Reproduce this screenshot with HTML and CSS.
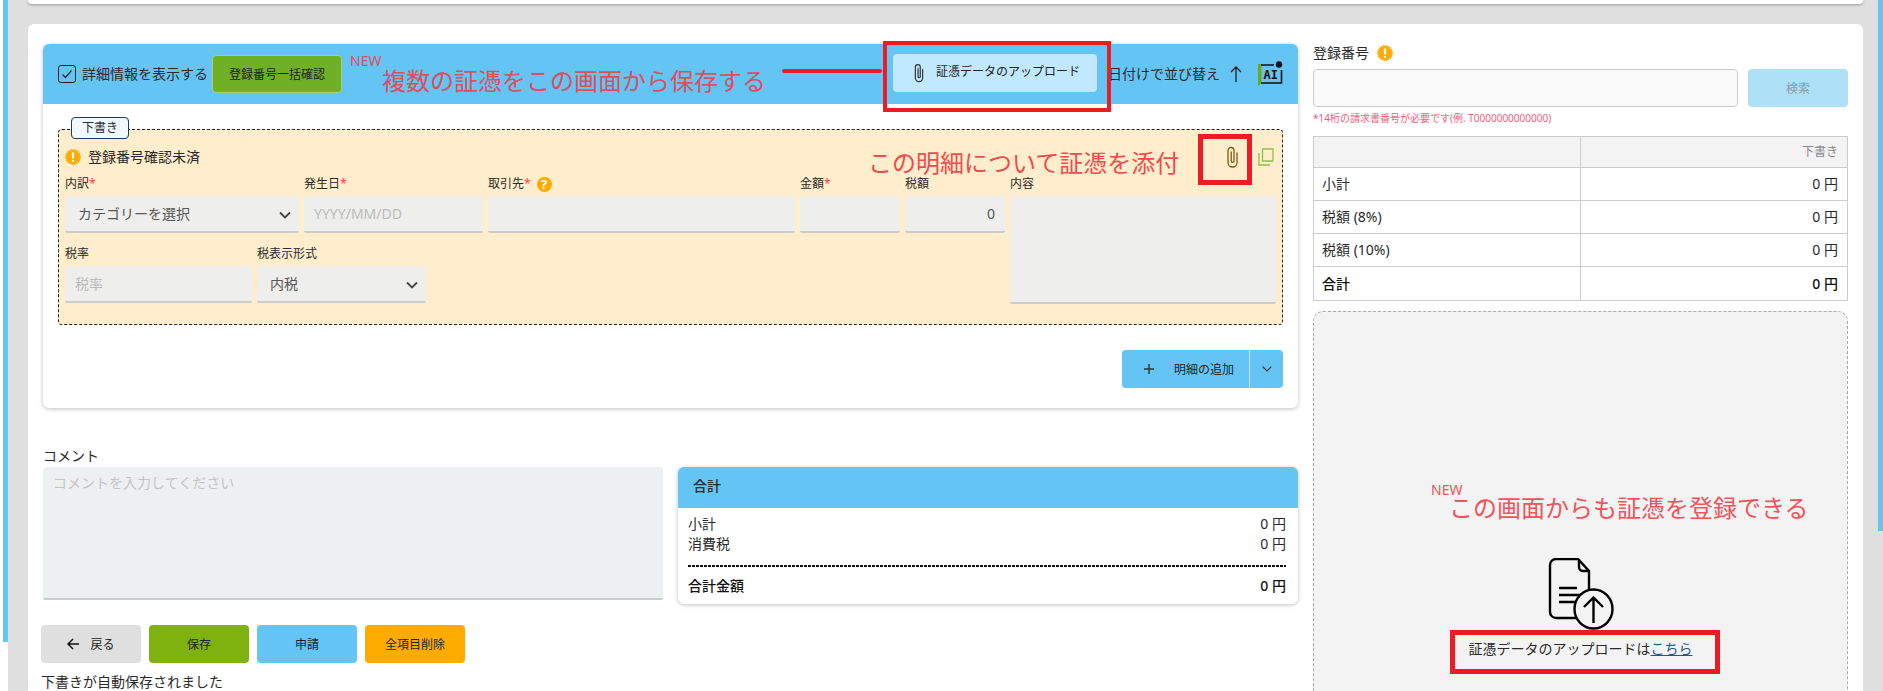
FILE: index.html
```html
<!DOCTYPE html>
<html lang="ja">
<head>
  <meta charset="UTF-8">
  <title>経費申請</title>
  <link rel="stylesheet" href="styles.css">
</head>
<body>
  <div class="edge-left"><div class="edge-strip edge-strip-left"></div></div>

  <div class="main">
    <div class="top-card"></div>

    <div class="page-card">
      <div class="col-left">
        <section class="list-card">
          <header class="list-head">
            <span class="checkbox">
              <svg width="12" height="10" viewBox="0 0 12 10"><path d="M1.5 5.5 4.5 8.5 10.5 1.5" fill="none" stroke="#222" stroke-width="1.2"/></svg>
            </span>
            <span class="check-label">詳細情報を表示する</span>
            <button class="btn-green">登録番号一括確認</button>

            <div class="head-right">
              <button class="btn-upload">
                <svg class="clip" width="12" height="20" viewBox="0 0 12 22"><path d="M10 7v9.500a4 4 0 0 1-8 0V4.500a2.700 2.700 0 0 1 5.400 0V15a1.200 1.200 0 0 1-2.400 0V6" fill="none" stroke="#333" stroke-width="1.300" stroke-linecap="round"/></svg>
                <span class="upload-text">証憑データのアップロード</span>
              </button>
              <span class="sort-label">日付けで並び替え</span>
              <svg class="sort-arrow" width="12" height="16" viewBox="0 0 12 16"><path d="M6 16V1M1 6l5-5 5 5" fill="none" stroke="#222" stroke-width="1.300"/></svg>
              <svg class="ai-icon" width="25" height="25" viewBox="0 0 25 25">
                <path d="M0 3h3.500v19L0 25z" fill="#6fa81e"/>
                <path d="M3 4h13M23.500 9v13H3" fill="none" stroke="#111" stroke-width="1.600"/>
                <circle cx="21" cy="3.500" r="3.200" fill="#111"/>
                <text x="5.500" y="18" class="ai-text">AI</text>
              </svg>
            </div>
          </header>

          <div class="list-body">
            <div class="draft">
              <span class="draft-tag">下書き</span>

              <div class="draft-status">
                <svg class="warn" width="16" height="16" viewBox="0 0 16 16"><circle cx="8" cy="8" r="7" fill="#ffab00" stroke="#ffab00" stroke-width="2" stroke-dasharray="1.400 .8"/><rect x="6.900" y="3.200" width="2.200" height="6.400" rx="1.100" fill="#fff"/><circle cx="8" cy="11.900" r="1.200" fill="#fff"/></svg>
                <span>登録番号確認未済</span>
              </div>

              <svg class="row-copy" width="16" height="18" viewBox="0 0 16 18"><path d="M4.500 1h10.500v12H4.500z" fill="none" stroke="#8dc04a" stroke-width="1.300"/><path d="M1 5v12h11" fill="none" stroke="#8dc04a" stroke-width="1.300"/></svg>
              <svg class="row-clip" width="13" height="22" viewBox="0 0 12 22"><path d="M10.500 7v9.500a4.500 4.500 0 0 1-9 0V4.500a3 3 0 0 1 6 0V15a1.400 1.400 0 0 1-2.800 0V6" fill="none" stroke="#7a5c10" stroke-width="1.300" stroke-linecap="round"/></svg>

              <div class="fields">
                <div class="fields-left">
                  <div class="field-row">
                    <div class="field w-234">
                      <label>内訳<i>*</i></label>
                      <div class="control select">カテゴリーを選択
                        <svg class="chev" width="12" height="8" viewBox="0 0 12 8"><path d="M1 1.500l5 5 5-5" fill="none" stroke="#444" stroke-width="1.800"/></svg>
                      </div>
                    </div>
                    <div class="field w-179">
                      <label>発生日<i>*</i></label>
                      <div class="control placeholder">YYYY/MM/DD</div>
                    </div>
                    <div class="field w-307">
                      <label>取引先<i>*</i><span class="help">?</span></label>
                      <div class="control"></div>
                    </div>
                    <div class="field w-100">
                      <label>金額<i>*</i></label>
                      <div class="control"></div>
                    </div>
                    <div class="field w-100">
                      <label>税額</label>
                      <div class="control number">0</div>
                    </div>
                  </div>
                  <div class="field-row">
                    <div class="field w-187">
                      <label>税率</label>
                      <div class="control placeholder">税率</div>
                    </div>
                    <div class="field w-169">
                      <label>税表示形式</label>
                      <div class="control select">内税
                        <svg class="chev" width="12" height="8" viewBox="0 0 12 8"><path d="M1 1.500l5 5 5-5" fill="none" stroke="#444" stroke-width="1.800"/></svg>
                      </div>
                    </div>
                  </div>
                </div>
                <div class="field w-267">
                  <label>内容</label>
                  <div class="control memo"></div>
                </div>
              </div>
            </div>

            <div class="add-row">
              <button class="btn-add">
                <svg width="12" height="12" viewBox="0 0 12 12"><path d="M6 1v10M1 6h10" stroke="#333" stroke-width="1.400"/></svg>
                <span>明細の追加</span>
              </button>
              <button class="btn-add-more">
                <svg width="10" height="6" viewBox="0 0 10 6"><path d="M.7.700 5 5 9.300.700" fill="none" stroke="#333" stroke-width="1.200"/></svg>
              </button>
            </div>
          </div>
        </section>

        <div class="bottom-row">
          <div class="comment-col">
            <div class="comment-label">コメント</div>
            <div class="comment-box">コメントを入力してください</div>
            <div class="actions">
              <button class="btn btn-back">
                <svg width="12" height="12" viewBox="0 0 12 12"><path d="M12 6H1M6 1 1 6l5 5" fill="none" stroke="#111" stroke-width="1.500"/></svg>
                戻る
              </button>
              <button class="btn btn-save">保存</button>
              <button class="btn btn-apply">申請</button>
              <button class="btn btn-clear">全項目削除</button>
            </div>
            <div class="autosave">下書きが自動保存されました</div>
          </div>

          <section class="total-card">
            <div class="total-head">合計</div>
            <div class="total-body">
              <div class="total-line"><span>小計</span><span>0 円</span></div>
              <div class="total-line"><span>消費税</span><span>0 円</span></div>
              <div class="total-line total-sum"><span>合計金額</span><span>0 円</span></div>
            </div>
          </section>
        </div>
      </div>

      <aside class="col-right">
        <div class="reg-label">
          <span>登録番号</span>
          <svg width="16" height="16" viewBox="0 0 16 16"><circle cx="8" cy="8" r="7" fill="#ffab00" stroke="#ffab00" stroke-width="2" stroke-dasharray="1.400 .8"/><rect x="6.900" y="3.200" width="2.200" height="6.400" rx="1.100" fill="#fff"/><circle cx="8" cy="11.900" r="1.200" fill="#fff"/></svg>
        </div>
        <div class="reg-search">
          <div class="reg-input"></div>
          <button class="btn-search">検索</button>
        </div>
        <p class="reg-note">*14桁の請求書番号が必要です(例. T0000000000000)</p>

        <table class="sum-table">
          <tr class="sum-head"><td></td><td>下書き</td></tr>
          <tr><td>小計</td><td>0 円</td></tr>
          <tr><td>税額 (8%)</td><td>0 円</td></tr>
          <tr><td>税額 (10%)</td><td>0 円</td></tr>
          <tr class="sum-total"><td>合計</td><td>0 円</td></tr>
        </table>

        <div class="dropzone">
          <svg width="66" height="72" viewBox="0 0 66 72">
            <path d="M41 48V13L30 1H8a6 6 0 0 0-6 6v47a6 6 0 0 0 6 6h20" fill="none" stroke="#000" stroke-width="2.400"/>
            <path d="M31 1v8a4 4 0 0 0 4 4h6" fill="none" stroke="#000" stroke-width="2.400"/>
            <path d="M11 30h18M11 37h24M11 44h18" stroke="#000" stroke-width="2.400"/>
            <ellipse cx="45.500" cy="51" rx="19" ry="19.500" fill="#f3f3f3" stroke="#000" stroke-width="2.400"/>
            <path d="M45.500 65V40M36 49l9.500-9.500L55 49" fill="none" stroke="#000" stroke-width="2.400"/>
          </svg>
          <p class="drop-text">証憑データのアップロードは<a href="#">こちら</a></p>
        </div>
      </aside>
    </div>
  </div>

  <div class="edge-right"><div class="edge-strip edge-strip-right"></div></div>

  <!-- red notes pasted over the screen -->
  <span class="note-new new-1">NEW</span>
  <span class="note note-1">複数の証憑をこの画面から保存する</span>
  <div class="note-line"></div>
  <div class="note-box box-upload"></div>
  <span class="note note-2">この明細について証憑を添付</span>
  <div class="note-box box-clip"></div>
  <span class="note-new new-2">NEW</span>
  <span class="note note-3">この画面からも証憑を登録できる</span>
  <div class="note-box box-link"></div>
</body>
</html>
```

FILE: styles.css
```css
* {
  box-sizing: border-box;
}

html {
  height: 691px;
  overflow: hidden;
}

body {
  position: relative;
  display: flex;
  margin: 0;
  height: 691px;
  overflow: hidden;
  background: #dfdfdf;
  color: #2a2a2a;
  font-family: "Noto Sans", "Noto Sans CJK JP", sans-serif;
  font-size: 14px;
  line-height: 16px;
}

button {
  font-family: inherit;
  border: none;
  padding: 0;
  color: #222;
}

/* window edges */
.edge-left {
  flex: none;
  width: 8px;
  padding-left: 3px;
  background: #fff;
}

.edge-right {
  flex: none;
  width: 5px;
}

.edge-strip {
  background: #64c4f3;
}

.edge-strip-left {
  width: 5px;
  height: 642px;
}

.edge-strip-right {
  width: 5px;
  height: 531px;
}

.main {
  flex: 1;
  min-width: 0;
  padding: 0 15px 0 20px;
}

.top-card {
  height: 4px;
  background: #fff;
  border-radius: 0 0 6px 6px;
  box-shadow: 0 1px 3px rgba(0, 0, 0, .3);
}

.page-card {
  display: flex;
  gap: 15px;
  margin-top: 20px;
  height: 667px;
  overflow: hidden;
  padding: 20px 15px 0;
  background: #fff;
  border-radius: 6px 6px 0 0;
}

.col-left {
  flex: none;
  width: 1255px;
}

.col-right {
  flex: none;
  width: 535px;
}

/* detail list */
.list-card {
  height: 364px;
  border-radius: 6px;
  background: #fff;
  box-shadow: 0 1px 4px rgba(0, 0, 0, .25);
}

.list-head {
  display: flex;
  align-items: center;
  height: 60px;
  padding: 0 15px;
  background: #64c4f3;
  border-radius: 6px 6px 0 0;
}

.checkbox {
  display: flex;
  align-items: center;
  justify-content: center;
  width: 18px;
  height: 18px;
  border: 1.5px solid #222;
  border-radius: 3px;
}

.check-label {
  margin-left: 6px;
  white-space: nowrap;
}

.btn-green {
  width: 130px;
  height: 38px;
  margin-left: 4px;
  background: #6fb026;
  border: 1px solid #a5d46a;
  border-radius: 4px;
  font-size: 12px;
}

.head-right {
  display: flex;
  align-items: center;
  margin-left: auto;
}

.btn-upload {
  display: flex;
  align-items: center;
  gap: 11px;
  width: 204px;
  height: 38px;
  margin-top: -2px;
  padding-left: 20px;
  background: #c0e9ff;
  border-radius: 4px;
  font-size: 12px;
}

.upload-text {
  margin-top: -4px;
}

.sort-label {
  margin-left: 11px;
  white-space: nowrap;
}

.sort-arrow {
  margin-left: 10px;
}

.ai-icon {
  margin-left: 16px;
  margin-top: -1px;
}

.ai-text {
  font-family: "DejaVu Sans Mono", monospace;
  font-size: 12px;
  font-weight: bold;
  fill: #111;
}

.list-body {
  padding: 25px 15px 0;
}

/* draft block */
.draft {
  position: relative;
  height: 196px;
  padding: 19px 6px 0;
  background: #ffedcb;
  border: 1px dashed #222;
  border-radius: 4px;
}

.draft-tag {
  position: absolute;
  top: -13px;
  left: 12px;
  width: 58px;
  height: 22px;
  background: #f0f9ff;
  border: 1px solid #1d3c55;
  border-radius: 4px;
  font-size: 12px;
  line-height: 20px;
  text-align: center;
}

.draft-status {
  display: flex;
  align-items: center;
  gap: 7px;
  height: 16px;
  font-size: 14px;
}

.row-clip {
  position: absolute;
  top: 16px;
  right: 43px;
}

.row-copy {
  position: absolute;
  top: 18px;
  right: 8px;
}

.fields {
  display: flex;
  gap: 5px;
  margin-top: 11px;
}

.fields-left {
  width: 940px;
}

.field-row {
  display: flex;
  gap: 5px;
  margin-bottom: 13px;
}

.field label {
  display: flex;
  align-items: center;
  height: 16px;
  margin-bottom: 4px;
  font-size: 12px;
  white-space: nowrap;
}

.field label i {
  color: #f44;
  font-style: normal;
}

.help {
  display: inline-block;
  width: 15px;
  height: 15px;
  margin-left: 6px;
  border-radius: 50%;
  background: #ffab00;
  color: #fff;
  font-size: 13px;
  font-weight: bold;
  line-height: 15px;
  text-align: center;
}

.w-234 { width: 234px; }
.w-179 { width: 179px; }
.w-307 { width: 307px; }
.w-100 { width: 100px; }
.w-187 { width: 187px; }
.w-169 { width: 169px; }
.w-267 { width: 267px; }

.control {
  display: flex;
  align-items: center;
  height: 37px;
  padding: 0 10px;
  background: #eeeeec;
  border-bottom: 2px solid #ccc;
  border-radius: 4px 4px 2px 2px;
  font-size: 14px;
  color: #555;
  white-space: nowrap;
}

.control.select {
  justify-content: space-between;
  padding: 0 8px 0 13px;
}

.control.placeholder {
  color: #bbb;
}

.control.number {
  justify-content: flex-end;
}

.control.memo {
  height: 108px;
}

.chev {
  margin-top: 2px;
}

/* add line button */
.add-row {
  display: flex;
  justify-content: flex-end;
  margin-top: 25px;
}

.btn-add {
  display: flex;
  align-items: center;
  gap: 19px;
  width: 127px;
  height: 38px;
  padding-left: 21px;
  background: #64c4f3;
  border-radius: 4px 0 0 4px;
  font-size: 12px;
}

.btn-add-more {
  display: flex;
  align-items: center;
  justify-content: center;
  width: 34px;
  height: 38px;
  background: #64c4f3;
  border-left: 1px solid #c0e9ff;
  border-radius: 0 4px 4px 0;
}

/* comment and totals */
.bottom-row {
  display: flex;
  align-items: flex-start;
  gap: 15px;
  margin-top: 40px;
}

.comment-col {
  flex: none;
  width: 620px;
}

.comment-label {
  height: 16px;
  margin-bottom: 3px;
}

.comment-box {
  height: 133px;
  padding: 8px 10px;
  background: #edf0f1;
  border-bottom: 2px solid #ccc;
  border-radius: 4px 4px 2px 2px;
  color: #c4c4c4;
}

.actions {
  display: flex;
  gap: 8px;
  margin: 25px 0 0 -2px;
}

.btn {
  display: flex;
  align-items: center;
  justify-content: center;
  gap: 11px;
  width: 100px;
  height: 38px;
  border-radius: 4px;
  font-size: 12px;
}

.btn-back { background: #dfdfdf; }
.btn-save { background: #7fb20f; }
.btn-apply { background: #64c4f3; }
.btn-clear { background: #ffab00; }

.autosave {
  margin: 11px 0 0 -2px;
}

.total-card {
  flex: none;
  width: 620px;
  height: 137px;
  margin-top: 19px;
  background: #fff;
  border-radius: 6px;
  box-shadow: 0 1px 4px rgba(0, 0, 0, .25);
}

.total-head {
  height: 41px;
  padding: 11px 15px 0;
  background: #64c4f3;
  border-radius: 6px 6px 0 0;
  font-weight: 500;
}

.total-body {
  padding: 8px 12px 0 10px;
}

.total-line {
  display: flex;
  justify-content: space-between;
  height: 20px;
  line-height: 16px;
}

.total-sum {
  height: auto;
  margin-top: 9px;
  padding-top: 13px;
  background: repeating-linear-gradient(90deg, #111 0 3px, transparent 3px 4px) top / 100% 2px no-repeat;
  font-weight: 500;
  color: #111;
}

/* right column */
.reg-label {
  display: flex;
  align-items: center;
  gap: 8px;
  height: 16px;
  margin-top: 1px;
}

.reg-search {
  display: flex;
  gap: 10px;
  margin-top: 8px;
}

.reg-input {
  flex: 1;
  height: 38px;
  background: #fafafa;
  border: 1px solid #ccc;
  border-radius: 4px;
}

.btn-search {
  width: 100px;
  height: 38px;
  background: #aee0f8;
  border-radius: 4px;
  color: #8a9aa0;
  font-size: 12px;
}

.reg-note {
  height: 14px;
  margin: 4px 0 0;
  color: #f0607a;
  font-size: 10px;
  line-height: 14px;
  white-space: nowrap;
}

.sum-table {
  width: 535px;
  height: 164px;
  margin-top: 11px;
  border-collapse: collapse;
  table-layout: fixed;
}

.sum-table td {
  height: 33px;
  padding: 0 9px 0 8px;
  border: 1px solid #ccc;
}

.sum-table td:last-child {
  text-align: right;
}

.sum-head td {
  height: 31px;
  background: #f3f3f3;
  color: #888;
  font-size: 12px;
}

.sum-total td {
  height: 34px;
  font-weight: 500;
  color: #111;
}

.dropzone {
  display: flex;
  flex-direction: column;
  align-items: center;
  height: 420px;
  margin-top: 10px;
  padding-top: 246px;
  background: #f3f3f3;
  border: 1px dashed #aaa;
  border-radius: 10px;
}

.drop-text {
  margin: 11px 0 0;
}

.drop-text a {
  color: #1d5a85;
}

/* annotations */
.note {
  position: absolute;
  font-size: 24px;
  line-height: 24px;
  white-space: nowrap;
}

.note-new {
  position: absolute;
  font-size: 14px;
  line-height: 12px;
}

.new-1 { left: 350px; top: 55px; color: #dc4f5d; }
.note-1 { left: 382px; top: 69px; color: #dc4f5d; }
.note-2 { left: 868px; top: 151px; color: #ee4c4f; }
.new-2 { left: 1431px; top: 484px; color: #f2525c; }
.note-3 { left: 1449px; top: 496px; color: #f2525c; }

.note-line {
  position: absolute;
  left: 782px;
  top: 69px;
  width: 100px;
  height: 4px;
  background: #ed1c24;
  border-radius: 2px;
}

.note-box {
  position: absolute;
  border: 4px solid #ed1c24;
}

.box-upload { left: 883px; top: 41px; width: 228px; height: 71px; }
.box-clip { left: 1198px; top: 134px; width: 54px; height: 51px; border-width: 5px; }
.box-link { left: 1450px; top: 630px; width: 270px; height: 44px; border-width: 5px; }
```
